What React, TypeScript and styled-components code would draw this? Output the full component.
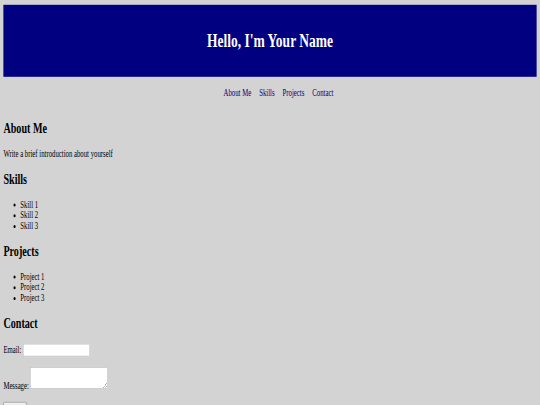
import React from "react";
import styled, { createGlobalStyle } from "styled-components";

const GlobalStyle = createGlobalStyle`
  html, body {
    margin: 0;
    padding: 0;
    background: #d3d3d3;
    overflow: hidden;
  }
  #root {
    width: 540px;
    height: 405px;
    overflow: hidden;
  }
`;

/* The reference is a 1280x675 page squeezed into 540x405. */
const Viewport = styled.div`
  width: 1280px;
  transform: scale(0.421875, 0.6);
  transform-origin: 0 0;
`;

const Page = styled.div`
  box-sizing: border-box;
  width: 1280px;
  padding: 8px;
  background: #d3d3d3;
  color: #000;
  font-family: "Liberation Serif", "Times New Roman", serif;
  font-size: 16px;
`;

const Header = styled.header`
  background: #000080;
  color: #fff;
  text-align: center;
  padding: 20px;
`;

const Title = styled.h1`
  margin: 0.67em 0;
  font-size: 2em;
  font-weight: bold;
`;

const Nav = styled.nav`
  padding: 18px 0 16px;
`;

const NavList = styled.ul`
  list-style: none;
  margin: 0;
  padding: 0 0 0 40px;
  display: flex;
  justify-content: center;
  gap: 19px;
`;

const NavLink = styled.a`
  color: #000080;
  text-decoration: none;
`;

const Section = styled.section``;

const Heading = styled.h2`
  font-size: 1.5em;
  margin: 0.83em 0;
  font-weight: bold;
`;

const Text = styled.p`
  margin: 1em 0;
`;

const List = styled.ul`
  margin: 1em 0;
  padding-left: 40px;
  list-style: disc;
`;

const Row = styled.div`
  margin: 18px 0;
`;

const Label = styled.label``;

const TextInput = styled.input`
  box-sizing: border-box;
  width: 158px;
  height: 21px;
  margin: 0 0 0 4px;
  background: #fff;
  border: 1px solid #b4b4b4;
  font-size: 13.33px;
`;

const TextArea = styled.textarea`
  box-sizing: border-box;
  width: 183px;
  height: 36px;
  margin: 0 0 0 4px;
  background: #fff;
  border: 1px solid #b4b4b4;
  vertical-align: baseline;
  font-family: "Liberation Mono", monospace;
  font-size: 13.33px;
`;

const SubmitButton = styled.button`
  font-family: "Liberation Sans", Arial, sans-serif;
  font-size: 13.33px;
  padding: 1px 6px;
  background: #efefef;
  border: 1px solid #767676;
  border-radius: 2px;
`;

const navItems = [
  { label: "About Me", href: "#about" },
  { label: "Skills", href: "#skills" },
  { label: "Projects", href: "#projects" },
  { label: "Contact", href: "#contact" },
];

export default function App() {
  return (
    <>
      <GlobalStyle />
      <Viewport>
        <Page>
          <Header>
            <Title>Hello, I'm Your Name</Title>
          </Header>
          <Nav>
            <NavList>
              {navItems.map((item) => (
                <li key={item.label}>
                  <NavLink href={item.href}>{item.label}</NavLink>
                </li>
              ))}
            </NavList>
          </Nav>
          <main>
            <Section id="about">
              <Heading>About Me</Heading>
              <Text>Write a brief introduction about yourself</Text>
            </Section>
            <Section id="skills">
              <Heading>Skills</Heading>
              <List>
                <li>Skill 1</li>
                <li>Skill 2</li>
                <li>Skill 3</li>
              </List>
            </Section>
            <Section id="projects">
              <Heading>Projects</Heading>
              <List>
                <li>Project 1</li>
                <li>Project 2</li>
                <li>Project 3</li>
              </List>
            </Section>
            <Section id="contact">
              <Heading>Contact</Heading>
              <form onSubmit={(e) => e.preventDefault()}>
                <Row>
                  <Label htmlFor="email">Email:</Label>
                  <TextInput id="email" type="email" />
                </Row>
                <Row>
                  <Label htmlFor="message">Message:</Label>
                  <TextArea id="message" />
                </Row>
                <Row>
                  <SubmitButton type="submit">Submit</SubmitButton>
                </Row>
              </form>
            </Section>
          </main>
        </Page>
      </Viewport>
    </>
  );
}
